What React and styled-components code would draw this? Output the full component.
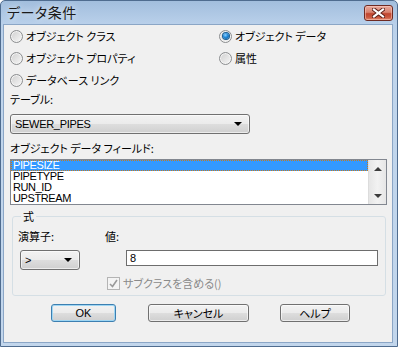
import React from "react";
import styled, { createGlobalStyle } from "styled-components";

const GlobalStyle = createGlobalStyle`
  html, body {
    margin: 0;
    padding: 0;
    background: #ffffff;
  }
  body {
    font-family: "Noto Sans CJK JP", "Liberation Sans", sans-serif;
    font-size: 11px;
    color: #000000;
  }
`;

const Window = styled.div`
  width: 398px;
  height: 347px;
  box-sizing: border-box;
  display: flex;
  flex-direction: column;
  border: 1px solid #4f6c8f;
  border-radius: 5px 5px 0 0;
  background: linear-gradient(#a2bedd 0px, #b9d0ea 23px, #c0d5ec 60px, #c2d6ec);
  overflow: hidden;
`;

const TitleBar = styled.div`
  height: 23px;
  flex: none;
  display: flex;
  align-items: flex-start;
  justify-content: space-between;
  padding: 0 4px 0 6px;
`;

const Title = styled.span`
  font-size: 14px;
  line-height: 22px;
  color: #1a1a1a;
  font-feature-settings: "palt";
  letter-spacing: 0.5px;
  text-shadow: 0 0 6px rgba(255, 255, 255, 0.9);
`;

const CloseButton = styled.div`
  margin-top: 4px;
  width: 27px;
  height: 14px;
  border: 1px solid #6e2a22;
  border-radius: 3px;
  display: flex;
  align-items: center;
  justify-content: center;
  background: linear-gradient(#e9a99c 0%, #d8826f 45%, #c0452f 55%, #c9573f 80%, #e08a6e 100%);
  box-shadow: inset 0 0 0 1px rgba(255, 210, 200, 0.5);
`;

const Client = styled.div`
  flex: 1;
  margin: 0 4px 3px 2px;
  border: 1px solid #8ba6c6;
  background: #f0f0f0;
  display: flex;
  flex-direction: column;
  padding: 0 5px 0 6px;
`;

const RadioGrid = styled.div`
  display: grid;
  grid-template-columns: 209px 1fr;
  grid-auto-rows: 22px;
`;

const RadioRow = styled.label`
  display: flex;
  align-items: center;
  gap: 3px;
  font-feature-settings: "palt";
  line-height: 14px;
`;

const RadioCircle = styled.span`
  width: 11px;
  height: 11px;
  border-radius: 50%;
  border: 1px solid #8b8d8f;
  flex: none;
  background: linear-gradient(135deg, #cfcfcf, #f7f7f7);
  box-shadow: inset 0 0 0 1px #f4f4f4;
  display: flex;
  align-items: center;
  justify-content: center;

  &::after {
    content: "";
    width: 6px;
    height: 6px;
    border-radius: 50%;
    display: ${(p) => (p.$checked ? "block" : "none")};
    background: radial-gradient(circle at 40% 35%, #8fd0ff 0%, #1d87d8 45%, #0a4f8a 100%);
    box-shadow: 0 0 0 1px #1a5e95;
  }
`;

const FieldLabel = styled.div`
  line-height: 14px;
  font-feature-settings: "palt";
  margin-top: ${(p) => p.$top || 0}px;
`;

const Combo = styled.div`
  box-sizing: border-box;
  height: ${(p) => p.$h || 20}px;
  width: ${(p) => p.$w}px;
  margin-top: ${(p) => p.$top || 0}px;
  margin-left: ${(p) => p.$left || 0}px;
  border: 1px solid #707070;
  border-radius: 3px;
  background: linear-gradient(#f2f2f2 0%, #ebebeb 48%, #dddddd 52%, #cfcfcf 100%);
  box-shadow: inset 0 0 0 1px rgba(255, 255, 255, 0.6);
  display: flex;
  align-items: center;
  justify-content: space-between;
  padding: 0 7px 0 4px;
  font-family: "Liberation Sans", sans-serif;
  font-size: 11px;
  letter-spacing: -0.3px;
`;

const Arrow = styled.span`
  width: 0;
  height: 0;
  border-left: 4px solid transparent;
  border-right: 4px solid transparent;
  border-top: ${(p) => (p.$up ? "none" : `4px solid ${p.$color || "#000"}`)};
  border-bottom: ${(p) => (p.$up ? `4px solid ${p.$color || "#000"}` : "none")};
`;

const ListBox = styled.div`
  box-sizing: border-box;
  margin-top: 4px;
  height: 46px;
  border: 1px solid #828790;
  background: #ffffff;
  display: flex;
`;

const ListItems = styled.div`
  flex: 1;
  display: flex;
  flex-direction: column;
  font-family: "Liberation Sans", sans-serif;
  font-size: 11px;
  letter-spacing: -0.4px;
`;

const ListItem = styled.div`
  height: 11px;
  line-height: 11px;
  padding-left: 2px;
  color: ${(p) => (p.$selected ? "#ffffff" : "#000000")};
  background: ${(p) => (p.$selected ? "#3399ff" : "transparent")};
  outline: ${(p) => (p.$selected ? "1px dotted #c97a1a" : "none")};
  outline-offset: -1px;
`;

const ScrollBar = styled.div`
  width: 17px;
  flex: none;
  background: linear-gradient(90deg, #e6e6e6, #f2f2f2 50%, #e6e6e6);
  border-left: 1px solid #dcdcdc;
  display: flex;
  flex-direction: column;
  justify-content: space-between;
`;

const ScrollButton = styled.div`
  height: 17px;
  display: flex;
  align-items: center;
  justify-content: center;
`;

const GroupBox = styled.fieldset`
  margin: 4px 1px 0 2px;
  padding: 0 6px 5px 5px;
  border: 1px solid #d5dfe5;
  border-radius: 3px;
  min-width: 0;
`;

const Legend = styled.legend`
  padding: 0 2px;
  margin-left: 3px;
  line-height: 14px;
  font-size: 11px;
`;

const GroupGrid = styled.div`
  display: grid;
  grid-template-columns: 87px 1fr;
  padding-top: 6px;
`;

const TextInput = styled.div`
  box-sizing: border-box;
  height: 16px;
  margin: 7px 1px 0 21px;
  border: 1px solid #6d6d6d;
  background: #ffffff;
  padding-left: 3px;
  font-family: "Liberation Sans", sans-serif;
  font-size: 11px;
  line-height: 14px;
`;

const CheckRow = styled.div`
  grid-column: 2;
  display: flex;
  align-items: center;
  gap: 3px;
  margin: 6px 0 0 2px;
  color: #8a8a8a;
  font-feature-settings: "palt";
  line-height: 14px;
`;

const CheckBox = styled.span`
  width: 11px;
  height: 11px;
  flex: none;
  border: 1px solid #b4b4b4;
  background: #f4f4f4;
  display: flex;
  align-items: center;
  justify-content: center;
`;

const ButtonRow = styled.div`
  display: flex;
  margin-top: 8px;
  padding-left: 41px;
`;

const Button = styled.div`
  box-sizing: border-box;
  height: 18px;
  width: ${(p) => p.$w}px;
  margin-right: ${(p) => p.$gap || 0}px;
  border: 1px solid ${(p) => (p.$default ? "#3c7fb1" : "#707070")};
  border-radius: 3px;
  background: linear-gradient(#f2f2f2 0%, #ebebeb 48%, #dddddd 52%, #cfcfcf 100%);
  box-shadow: inset 0 0 0 1px ${(p) => (p.$default ? "#9fd6f3" : "rgba(255,255,255,0.6)")};
  display: flex;
  align-items: center;
  justify-content: center;
  font-family: "Liberation Sans", "Noto Sans CJK JP", sans-serif;
  font-size: 11px;
  font-feature-settings: "palt";
`;

const Radio = ({ checked, children }) => (
  <RadioRow>
    <RadioCircle $checked={checked} />
    {children}
  </RadioRow>
);

export default function App() {
  return (
    <>
      <GlobalStyle />
      <Window>
        <TitleBar>
          <Title>データ条件</Title>
          <CloseButton>
            <svg width="13" height="10" viewBox="0 0 13 10">
              <path d="M2 1.5 L11 8.5 M11 1.5 L2 8.5" stroke="#5a1d16" strokeWidth="4" strokeLinecap="square" />
              <path d="M2 1.5 L11 8.5 M11 1.5 L2 8.5" stroke="#ffffff" strokeWidth="2.2" strokeLinecap="square" />
            </svg>
          </CloseButton>
        </TitleBar>
        <Client>
          <RadioGrid>
            <Radio>オブジェクト クラス</Radio>
            <Radio checked>オブジェクト データ</Radio>
            <Radio>オブジェクト プロパティ</Radio>
            <Radio>属性</Radio>
            <Radio>データベース リンク</Radio>
          </RadioGrid>
          <FieldLabel $top={1}>テーブル:</FieldLabel>
          <Combo $w={240} $top={8}>
            <span>SEWER_PIPES</span>
            <Arrow />
          </Combo>
          <FieldLabel $top={7}>オブジェクト データ フィールド:</FieldLabel>
          <ListBox>
            <ListItems>
              <ListItem $selected>PIPESIZE</ListItem>
              <ListItem>PIPETYPE</ListItem>
              <ListItem>RUN_ID</ListItem>
              <ListItem>UPSTREAM</ListItem>
            </ListItems>
            <ScrollBar>
              <ScrollButton>
                <Arrow $up $color="#3c3c3c" />
              </ScrollButton>
              <ScrollButton>
                <Arrow $color="#3c3c3c" />
              </ScrollButton>
            </ScrollBar>
          </ListBox>
          <GroupBox>
            <Legend>式</Legend>
            <GroupGrid>
              <FieldLabel>演算子:</FieldLabel>
              <FieldLabel>値:</FieldLabel>
              <Combo $w={60} $top={7} $left={2}>
                <span>&gt;</span>
                <Arrow />
              </Combo>
              <TextInput>8</TextInput>
              <CheckRow>
                <CheckBox>
                  <svg width="9" height="9" viewBox="0 0 9 9">
                    <path d="M1 5 L3.5 7.5 L8 1" stroke="#9a9a9a" strokeWidth="1.6" fill="none" />
                  </svg>
                </CheckBox>
                サブクラスを含める()
              </CheckRow>
            </GroupGrid>
          </GroupBox>
          <ButtonRow>
            <Button $w={65} $gap={32} $default>OK</Button>
            <Button $w={101} $gap={31}>キャンセル</Button>
            <Button $w={70}>ヘルプ</Button>
          </ButtonRow>
        </Client>
      </Window>
    </>
  );
}
